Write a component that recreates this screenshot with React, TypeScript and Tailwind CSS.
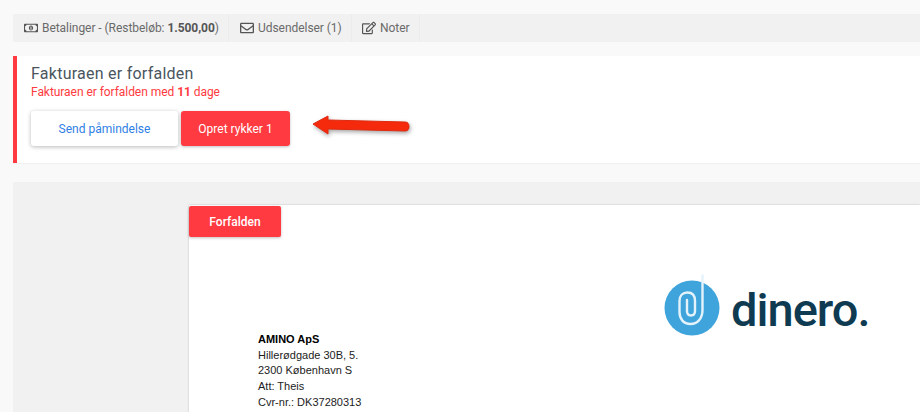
import React from 'react';
import { FaRegEdit, FaRegEnvelope, FaRegMoneyBillAlt } from 'react-icons/fa';

const Tab: React.FC<{ icon: React.ReactNode; children: React.ReactNode; className?: string }> = ({ icon, children, className = '' }) => (
  <div className={`flex h-full items-center gap-[4px] border-r border-[#ececec] text-[12px] tracking-[-0.05px] text-[#6a6a6a] ${className}`}>
    {icon}
    <span>{children}</span>
  </div>
);

const Arrow = () => (
  <svg width="100" height="26" viewBox="0 0 100 26" className="ml-[21px] mt-[-7px] overflow-visible drop-shadow-[1px_2px_2px_rgba(0,0,0,0.35)]">
    <path d="M2 12 L17 4 L17 8 L94 10 C97 10 98 12 98 14.5 C98 17 97 19 94 19 L17 17 L17 22 Z" fill="#f5290c" stroke="#de2a10" strokeWidth="1" strokeLinejoin="round" />
  </svg>
);

const DineroLogo = () => (
  <div className="flex items-center">
    <svg width="56" height="62" viewBox="0 0 56 62" className="mt-[-6px]">
      <circle cx="28" cy="34" r="27.5" fill="#3fa4dc" />
      <path
        d="M38.5 1.5 L38.5 36 C38.5 45 33 50 26.5 50 C19.5 50 15.5 45 15.5 38 L15.5 27 C15.5 22 18.5 18.5 23.5 18.5 C28.5 18.5 31 22 31 27 L31 37 C31 40 29.5 41.5 27 41.5 C24.5 41.5 23 40 23 37 L23 26"
        fill="none"
        stroke="#e4f3fb"
        strokeWidth="2.4"
        strokeLinecap="round"
      />
    </svg>
    <span className="ml-[11px] mt-[2px] font-['Roboto',sans-serif] text-[47px] font-medium leading-none tracking-[-1px] text-[#0f3b52]">dinero.</span>
  </div>
);

export default function App() {
  return (
    <div className="h-[412px] w-[920px] overflow-hidden bg-[#f9f9f9] pl-[13px] pt-[14px] font-['Roboto',sans-serif]">
      <div className="flex h-[28px] items-center bg-[#f1f1f1]">
        <Tab className="w-[216px] pl-[11px]" icon={<FaRegMoneyBillAlt size={14} className="text-[#555]" />}>
          Betalinger - (Restbeløb: <b className="font-bold text-[#555]">1.500,00</b>)
        </Tab>
        <Tab className="w-[123px] pl-[11px]" icon={<FaRegEnvelope size={14} className="text-[#555]" />}>
          Udsendelser (1)
        </Tab>
        <Tab className="w-[68px] pl-[10px]" icon={<FaRegEdit size={14} className="text-[#555]" />}>
          Noter
        </Tab>
      </div>

      <div className="mt-[14px] h-[107px] border-l-[4px] border-[#ff3a40] bg-white pl-[14px] pt-[8px] shadow-[0_1px_1px_rgba(0,0,0,0.03)]">
        <h2 className="text-[16px] leading-[20px] tracking-[0.25px] text-[#4a5560]">Fakturaen er forfalden</h2>
        <p className="mt-[1px] text-[12px] leading-[14px] tracking-[-0.05px] text-[#ff3a40]">
          Fakturaen er forfalden med <b className="font-bold">11</b> dage
        </p>
        <div className="mt-[12px] flex items-center">
          <button className="h-[35px] w-[147px] rounded-[3px] bg-white text-[12px] text-[#2f80e4] shadow-[0_1px_4px_rgba(0,0,0,0.28)]">
            Send påmindelse
          </button>
          <button className="ml-[3px] h-[35px] w-[109px] rounded-[3px] bg-[#ff3a40] text-[12px] text-white shadow-[0_1px_3px_rgba(0,0,0,0.25)]">
            Opret rykker 1
          </button>
          <Arrow />
        </div>
      </div>

      <div className="mt-[19px] h-[240px] bg-[#f1f1f1] pl-[176px] pt-[23px]">
        <div className="relative h-full bg-white shadow-[0_0_2px_rgba(0,0,0,0.2)]">
          <div className="absolute left-0 top-[1px] flex h-[31px] w-[92px] items-center justify-center rounded-[2px] bg-[#ff3a40] text-[12px] font-medium text-white shadow-[0_1px_3px_rgba(0,0,0,0.25)]">
            Forfalden
          </div>
          <div className="pl-[69px] pt-[127px] font-['Liberation_Sans',sans-serif] text-[11px] leading-[15.7px] text-[#1c1c1c]">
            <p className="font-bold text-black">AMINO ApS</p>
            <p>Hillerødgade 30B, 5.</p>
            <p>2300 København S</p>
            <p>Att: Theis</p>
            <p>Cvr-nr.: DK37280313</p>
          </div>
          <div className="absolute left-[475px] top-[75px]">
            <DineroLogo />
          </div>
        </div>
      </div>
    </div>
  );
}
